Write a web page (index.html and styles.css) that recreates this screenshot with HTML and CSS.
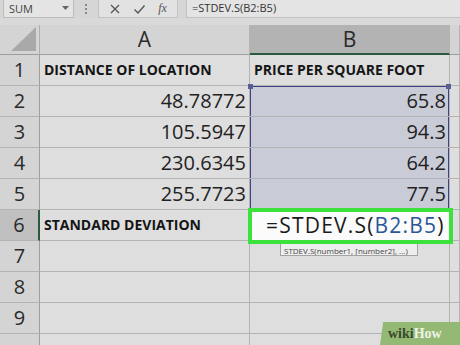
FILE: index.html
```html
<!DOCTYPE html>
<html lang="en">
<head>
    <meta charset="UTF-8">
    <title>STDEV.S</title>
    <link rel="stylesheet" href="styles.css">
</head>
<body>
    <div class="toolbar">
        <div class="name-box">
            <span>SUM</span>
            <svg width="7" height="5" viewBox="0 0 7 5"><path d="M0 0 L7 0 L3.5 4 Z" fill="#666"/></svg>
        </div>
        <div class="grip"><i></i><i></i><i></i></div>
        <div class="fx-buttons">
            <svg width="12" height="12" viewBox="0 0 12 12"><path d="M2 2 L10 10 M10 2 L2 10" stroke="#555" stroke-width="1.3" fill="none"/></svg>
            <svg width="13" height="12" viewBox="0 0 13 12"><path d="M1.5 6.5 L5 10 L11.5 2.5" stroke="#555" stroke-width="1.4" fill="none"/></svg>
            <span class="fx">fx</span>
        </div>
        <div class="formula-input">=STDEV.S(B2:B5)</div>
    </div>

    <div class="sheet">
        <!-- header row -->
        <div class="corner"><div class="tri"></div></div>
        <div class="col-head">A</div>
        <div class="col-head active">B</div>
        <div class="col-head"></div>

        <div class="row-head">1</div>
        <div class="cell label">DISTANCE OF LOCATION</div>
        <div class="cell label">PRICE PER SQUARE FOOT</div>
        <div class="cell"></div>

        <div class="row-head">2</div>
        <div class="cell num">48.78772</div>
        <div class="cell num sel sel-top">65.8</div>
        <div class="cell"></div>

        <div class="row-head">3</div>
        <div class="cell num">105.5947</div>
        <div class="cell num sel">94.3</div>
        <div class="cell"></div>

        <div class="row-head">4</div>
        <div class="cell num">230.6345</div>
        <div class="cell num sel">64.2</div>
        <div class="cell"></div>

        <div class="row-head">5</div>
        <div class="cell num">255.7723</div>
        <div class="cell num sel sel-bottom">77.5</div>
        <div class="cell"></div>

        <div class="row-head active">6</div>
        <div class="cell label">STANDARD DEVIATION</div>
        <div class="cell editing">
            <div class="hint">STDEV.S(number1, [number2], ...)</div>
            <div class="editor">=STDEV.S(<span class="ref">B2:B5</span>)</div>
        </div>
        <div class="cell"></div>

        <div class="row-head">7</div>
        <div class="cell"></div><div class="cell"></div><div class="cell"></div>
        <div class="row-head">8</div>
        <div class="cell"></div><div class="cell"></div><div class="cell"></div>
        <div class="row-head">9</div>
        <div class="cell"></div><div class="cell"></div><div class="cell"></div>
        <!-- row 10 only peeks in at the bottom edge -->
        <div class="row-head"></div>
        <div class="cell"></div><div class="cell"></div><div class="cell"></div>
    </div>

    <div class="wikihow"><span class="wiki">wiki</span><span class="how">How</span></div>
</body>
</html>
```

FILE: styles.css
```css
* {
    margin: 0;
    padding: 0;
    box-sizing: border-box;
}

body {
    width: 460px;
    height: 345px;
    overflow: hidden;
    background: #dedede;
    font-family: 'Open Sans', 'Noto Sans', sans-serif;
    color: #222;
    position: relative;
}

/* formula bar */
.toolbar {
    height: 18px;
    display: flex;
    align-items: stretch;
    background: #d6d6d6;
    border-bottom: 7px solid #d9d9d9;
    box-sizing: content-box;
}

.name-box {
    width: 71px;
    margin-left: 3px;
    background: #e4e4e4;
    border: 1px solid #bcbcbc;
    border-top: none;
    display: flex;
    align-items: center;
    justify-content: space-between;
    padding: 0 4px 0 5px;
    font-size: 11px;
    color: #444;
}

.grip {
    width: 24px;
    display: flex;
    flex-direction: column;
    align-items: center;
    justify-content: center;
    gap: 2px;
}

.grip i {
    width: 2px;
    height: 2px;
    background: #888;
}

.fx-buttons {
    width: 80px;
    background: #e2e2e2;
    border: 1px solid #c2c2c2;
    border-top: none;
    display: flex;
    align-items: center;
    justify-content: space-around;
    padding: 0 4px;
}

.fx {
    font-family: 'Liberation Serif', serif;
    font-style: italic;
    font-size: 12px;
    color: #555;
}

.formula-input {
    flex: 1;
    margin-left: 8px;
    background: #e4e4e4;
    border: 1px solid #c2c2c2;
    border-top: none;
    border-right: none;
    font-size: 11px;
    line-height: 16px;
    padding-left: 5px;
    color: #333;
}

/* grid */
.sheet {
    display: grid;
    grid-template-columns: 40px 210px 200px 10px;
    grid-template-rows: 30px;
    grid-auto-rows: 31px;
    background: #dedede;
}

.corner {
    background: #d4d4d4;
    border-right: 1px solid #b0b0b0;
    border-bottom: 1px solid #9e9e9e;
    position: relative;
}

.tri {
    position: absolute;
    right: 3px;
    bottom: 3px;
    width: 0;
    height: 0;
    border-left: 25px solid transparent;
    border-bottom: 24px solid #a9a9a9;
}

.col-head {
    background: #d4d4d4;
    border-right: 1px solid #b3b3b3;
    border-bottom: 1px solid #9e9e9e;
    text-align: center;
    font-size: 21px;
    line-height: 29px;
    color: #2a2a2a;
}

.col-head.active {
    background: #b3b3b3;
    border-bottom: 2px solid #2c5a3e;
}

.row-head {
    background: #d4d4d4;
    border-right: 1px solid #9e9e9e;
    border-bottom: 1px solid #b3b3b3;
    text-align: center;
    font-size: 20px;
    line-height: 30px;
    color: #2a2a2a;
}

.row-head.active {
    background: #c0c0c0;
    border-right: 2px solid #2c5a3e;
}

.cell {
    background: #dedede;
    border-right: 1px solid #b3b3b3;
    border-bottom: 1px solid #b3b3b3;
    white-space: nowrap;
    overflow: hidden;
}

.label {
    font-weight: 700;
    font-size: 14px;
    line-height: 30px;
    padding-left: 4px;
    color: #151515;
}

.num {
    text-align: right;
    font-size: 20px;
    line-height: 30px;
    padding-right: 3px;
    color: #222;
}

.sel {
    background: #c9ccd6;
    box-shadow: inset 1px 0 0 #3f4384, inset -1px 0 0 #3f4384;
    position: relative;
    overflow: visible;
}

.sel-top {
    box-shadow: inset 1px 0 0 #3f4384, inset -1px 0 0 #3f4384, inset 0 1px 0 #3f4384;
}

.sel-top::before,
.sel-top::after {
    content: '';
    position: absolute;
    top: -2px;
    width: 5px;
    height: 5px;
    background: #5a5e96;
}

.sel-top::before {
    left: -2px;
}

.sel-top::after {
    right: -2px;
}

.sel-bottom {
    box-shadow: inset 1px 0 0 #3f4384, inset -1px 0 0 #3f4384, inset 0 -1px 0 #3f4384;
}

.editing {
    position: relative;
    overflow: visible;
    z-index: 2;
}

.editor {
    position: absolute;
    left: -2px;
    top: -2px;
    right: -4px;
    bottom: -4px;
    background: #fbfbfb;
    border: 4px solid #3be23b;
    font-size: 21px;
    letter-spacing: 1.2px;
    line-height: 27px;
    padding-left: 14px;
    color: #1a1a1a;
}

.ref {
    color: #2b5797;
}

.hint {
    position: absolute;
    left: 30px;
    top: 30px;
    width: 138px;
    height: 16px;
    background: #eeeeee;
    border: 1px solid #a3a3a3;
    font-size: 8px;
    line-height: 19px;
    padding-left: 3px;
    color: #444;
    overflow: hidden;
}

/* watermark */
.wikihow {
    position: absolute;
    right: 0;
    bottom: 0;
    width: 80px;
    height: 23px;
    background: #94b974;
    clip-path: polygon(4% 0, 100% 0, 100% 100%, 0 100%);
    font-family: 'Liberation Serif', serif;
    font-weight: 700;
    font-size: 14px;
    line-height: 23px;
    padding-left: 8px;
}

.wiki {
    color: #3b4a2c;
}

.how {
    color: #eef3e6;
}
```
